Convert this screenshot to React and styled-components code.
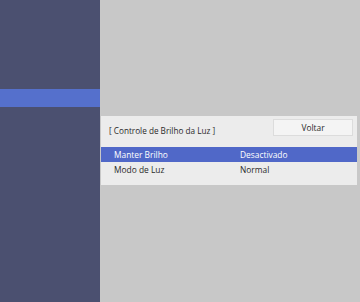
import React from "react";
import styled, { createGlobalStyle } from "styled-components";

const Global = createGlobalStyle`
  html, body { margin: 0; padding: 0; }
  body { width: 360px; height: 302px; overflow: hidden; background: #c8c8c8; }
`;

const Frame = styled.div`
  display: flex;
  width: 360px;
  height: 302px;
  font-family: "Open Sans", "Noto Sans", sans-serif;
`;

const Sidebar = styled.div`
  width: 100px;
  flex: none;
  background: #4b5070;
  padding-top: 89px;
  box-sizing: border-box;
`;

const SideActive = styled.div`
  height: 18px;
  background: #5570cc;
`;

const Main = styled.div`
  flex: 1;
  background: #c8c8c8;
  padding: 116px 3px 0 1px;
  box-sizing: border-box;
`;

const Panel = styled.div`
  background: #ececec;
  padding-bottom: 8px;
`;

const Header = styled.div`
  display: flex;
  justify-content: space-between;
  align-items: flex-start;
  height: 31px;
  padding: 3px 4px 0 8px;
  box-sizing: border-box;
`;

const Title = styled.div`
  margin-top: 3px;
  font-size: 8.2px;
  line-height: 17px;
  color: #2a2a2a;
  white-space: nowrap;
`;

const Button = styled.div`
  width: 80px;
  height: 17px;
  box-sizing: border-box;
  background: #f4f4f4;
  border: 1px solid #dcdcdc;
  font-size: 8.4px;
  line-height: 15px;
  text-align: center;
  color: #2a2a2a;
`;

const Row = styled.div`
  display: grid;
  grid-template-columns: 126px 1fr;
  height: 15px;
  padding-left: 13px;
  align-items: center;
  font-size: 8.4px;
  color: ${(p) => (p.$active ? "#ffffff" : "#2a2a2a")};
  background: ${(p) => (p.$active ? "#5068c8" : "transparent")};
`;

export default function App() {
  return (
    <>
      <Global />
      <Frame>
        <Sidebar>
          <SideActive />
        </Sidebar>
        <Main>
          <Panel>
            <Header>
              <Title>[ Controle de Brilho da Luz ]</Title>
              <Button>Voltar</Button>
            </Header>
            <Row $active>
              <span>Manter Brilho</span>
              <span>Desactivado</span>
            </Row>
            <Row>
              <span>Modo de Luz</span>
              <span>Normal</span>
            </Row>
          </Panel>
        </Main>
      </Frame>
    </>
  );
}
